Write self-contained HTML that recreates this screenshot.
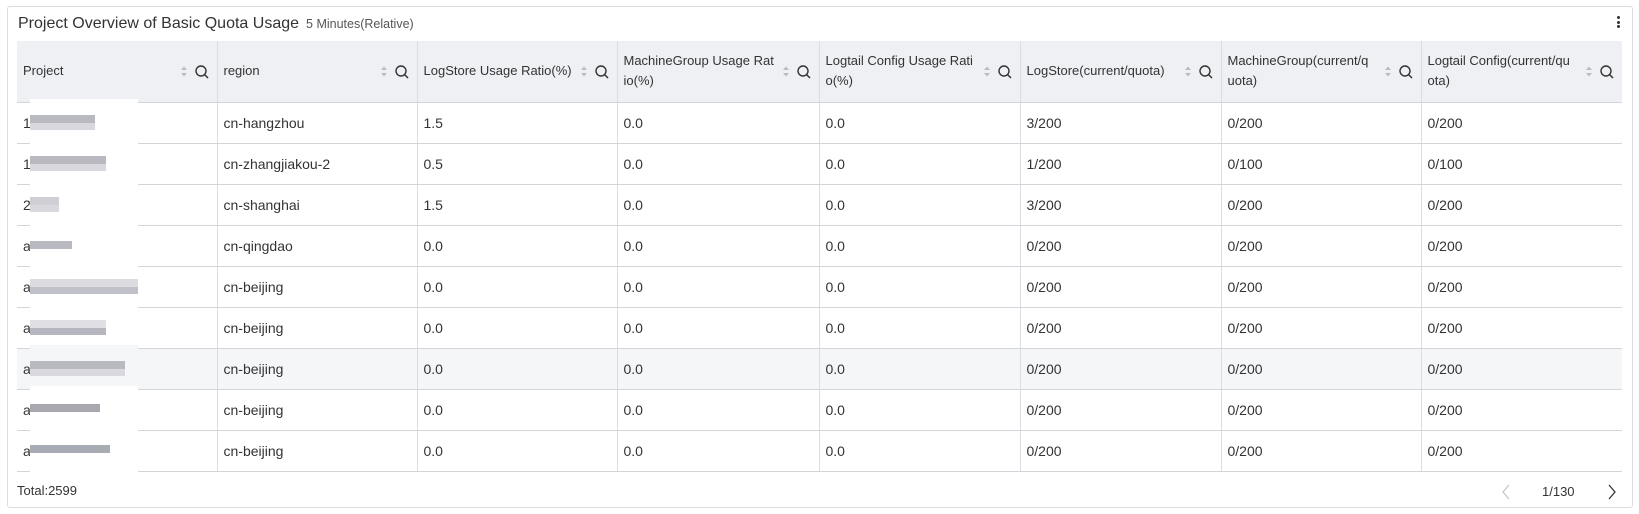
<!DOCTYPE html>
<html><head><meta charset="utf-8"><style>
*{box-sizing:border-box;margin:0;padding:0}
body{width:1639px;height:514px;background:#fff;font-family:"Liberation Sans",sans-serif;color:#333;font-size:14px;position:relative;overflow:hidden}
.card{position:absolute;left:7px;top:6px;width:1626px;height:502px;border:1px solid #dcdde0;border-radius:3px}
.title{position:absolute;left:18px;top:15px;font-size:16px;color:#333}
.title span{font-size:12.5px;color:#555;margin-left:7px}
.dots{position:absolute;left:1617px;top:16px;width:3px}
.dots i{display:block;width:3px;height:3px;background:#333;border-radius:50%;margin-bottom:1.5px}
table{position:absolute;left:17px;top:41px;border-collapse:collapse;table-layout:fixed;width:1605px}
th{background:#eef0f4;height:61px;font-weight:normal;font-size:13px;text-align:left;padding:0 36px 0 6px;border-right:1px solid #dcdde0;position:relative;line-height:20px;color:#333;border-bottom:1px solid #d3d5da;word-break:break-all}
td{height:41px;padding:0 6px;border-right:1px solid #dcdde0;border-bottom:1px solid #d3d5da;position:relative}
td:last-child,th:last-child{border-right:none}
tr.h td{background:#f5f6f8}
.ic{position:absolute;right:4px;top:23px;width:34px;height:16px}
.blur{position:absolute;left:13px;top:-4px;width:108px;height:48px;background:#fff;z-index:2}
.blur b{position:absolute;left:0;top:16px;height:8px;background:#b9b9c1}
.blur u{position:absolute;left:0;top:24px;height:7px;background:#d8d8de}
.foot{position:absolute;left:17px;top:483px;font-size:13px}
.pg{position:absolute;left:1542px;top:484px;font-size:13px;color:#333}
</style></head><body>
<div class="card"></div>
<div class="title">Project Overview of Basic Quota Usage<span>5 Minutes(Relative)</span></div>
<div class="dots"><i></i><i></i><i></i></div>
<svg width="0" height="0" style="position:absolute"><defs><g id="ic"><path d="M2 6 L5 2.5 L8 6Z M2 9 L5 12.5 L8 9Z" fill="#b8bcc4"/><circle cx="22" cy="7" r="5" fill="none" stroke="#333" stroke-width="1.4"/><path d="M25.6 10.6 L29 14" stroke="#333" stroke-width="1.5"/></g></defs></svg>
<table>
<colgroup><col style="width:200px"><col style="width:200px"><col style="width:200px"><col style="width:202px"><col style="width:201px"><col style="width:201px"><col style="width:200px"><col style="width:201px"></colgroup>
<tr>
<th>Project<svg class="ic"><use href="#ic"/></svg></th>
<th>region<svg class="ic"><use href="#ic"/></svg></th>
<th style="white-space:nowrap">LogStore Usage Ratio(%)<svg class="ic"><use href="#ic"/></svg></th>
<th>MachineGroup Usage Rat<br>io(%)<svg class="ic"><use href="#ic"/></svg></th>
<th>Logtail Config Usage Rati<br>o(%)<svg class="ic"><use href="#ic"/></svg></th>
<th>LogStore(current/quota)<svg class="ic"><use href="#ic"/></svg></th>
<th>MachineGroup(current/q<br>uota)<svg class="ic"><use href="#ic"/></svg></th>
<th>Logtail Config(current/qu<br>ota)<svg class="ic"><use href="#ic"/></svg></th>
</tr>
<tr><td>1<div class="blur"><b style="width:65px"></b><u style="width:65px"></u></div></td><td>cn-hangzhou</td><td>1.5</td><td>0.0</td><td>0.0</td><td>3/200</td><td>0/200</td><td>0/200</td></tr>
<tr><td>1<div class="blur"><b style="width:76px"></b><u style="width:76px"></u></div></td><td>cn-zhangjiakou-2</td><td>0.5</td><td>0.0</td><td>0.0</td><td>1/200</td><td>0/100</td><td>0/100</td></tr>
<tr><td>2<div class="blur"><b style="width:29px;background:#d0d0d4"></b><u style="width:29px"></u></div></td><td>cn-shanghai</td><td>1.5</td><td>0.0</td><td>0.0</td><td>3/200</td><td>0/200</td><td>0/200</td></tr>
<tr><td>a<div class="blur"><b style="width:42px;top:19px"></b></div></td><td>cn-qingdao</td><td>0.0</td><td>0.0</td><td>0.0</td><td>0/200</td><td>0/200</td><td>0/200</td></tr>
<tr><td>a<div class="blur"><b style="width:108px;background:#dcdce0"></b><u style="width:108px;background:#bfc0ca"></u></div></td><td>cn-beijing</td><td>0.0</td><td>0.0</td><td>0.0</td><td>0/200</td><td>0/200</td><td>0/200</td></tr>
<tr><td>a<div class="blur"><b style="width:76px;background:#e0e0e4"></b><u style="width:76px;background:#b5b6c0"></u></div></td><td>cn-beijing</td><td>0.0</td><td>0.0</td><td>0.0</td><td>0/200</td><td>0/200</td><td>0/200</td></tr>
<tr class="h"><td>a<div class="blur" style="background:#f5f6f8"><b style="width:95px"></b><u style="width:95px"></u></div></td><td>cn-beijing</td><td>0.0</td><td>0.0</td><td>0.0</td><td>0/200</td><td>0/200</td><td>0/200</td></tr>
<tr><td>a<div class="blur"><b style="width:70px;background:#a8a8b0;top:18px"></b></div></td><td>cn-beijing</td><td>0.0</td><td>0.0</td><td>0.0</td><td>0/200</td><td>0/200</td><td>0/200</td></tr>
<tr><td>a<div class="blur"><b style="width:80px;background:#a8aab4;top:18px"></b></div></td><td>cn-beijing</td><td>0.0</td><td>0.0</td><td>0.0</td><td>0/200</td><td>0/200</td><td>0/200</td></tr>
</table>
<div class="foot">Total:2599</div>
<svg style="position:absolute;left:1500px;top:483px" width="12" height="18"><path d="M9 2 L3 9 L9 16" fill="none" stroke="#c8c8cc" stroke-width="1.3"/></svg>
<div class="pg">1/130</div>
<svg style="position:absolute;left:1606px;top:483px" width="12" height="18"><path d="M3 2 L9 9 L3 16" fill="none" stroke="#333" stroke-width="1.3"/></svg>
</body></html>
